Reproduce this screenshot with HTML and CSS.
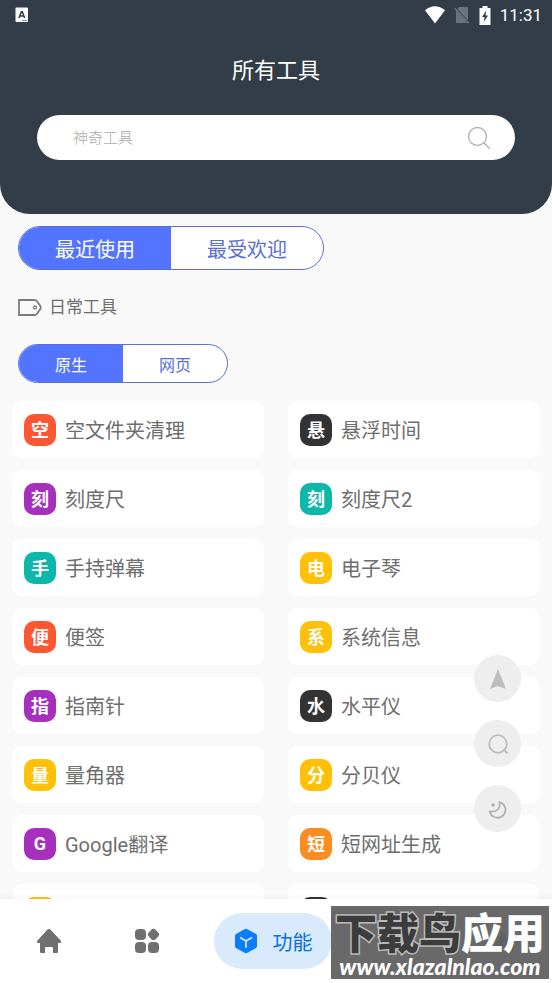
FILE: index.html
```html
<!DOCTYPE html>
<html lang="zh-CN">
<head>
<meta charset="utf-8">
<meta name="viewport" content="width=device-width, initial-scale=1">
<title>所有工具</title>
<link rel="stylesheet" href="styles.css">
</head>
<body>
<div class="app">
  <header class="header">
    <div class="status">
      <svg class="status-app" width="14" height="16" viewBox="0 0 14 16"><rect x="0.500" y="0.500" width="12.500" height="14.500" rx="1" fill="#fff"/><path d="M4 11 6.300 4.800h1L9.600 11M5 9h3.600" fill="none" stroke="#333d47" stroke-width="1.500"/><path d="M7 13.500h5" stroke="#8a9299"/></svg>
      <div class="status-right">
        <svg width="20" height="18" viewBox="0 0 20 18"><path d="M0 4.300Q10-3.800 20 4.300L10 17.500z" fill="#fff"/></svg>
        <svg width="16" height="18" viewBox="0 0 16 18"><path d="M5 1h9v13.200L3.500 3z" fill="#6b747c"/><path d="M2 4.500 13.500 17H2z" fill="#6b747c"/><path d="M.8 2.200 14.800 17.300" stroke="#6b747c" stroke-width="1.500"/></svg>
        <svg width="12" height="19" viewBox="0 0 12 19"><path d="M3.500 0h5v2h3v17H.5V2h3z" fill="#fff"/><path d="M7.300 4.500 3 11h2.600L4.800 16 9 9.500H6.500z" fill="#333d47"/></svg>
        <span class="clock">11:31</span>
      </div>
    </div>
    <h1 class="title">所有工具</h1>
    <form class="search">
      <input class="search-input" type="search" placeholder="神奇工具" aria-label="搜索工具">
      <button class="search-button" type="button" aria-label="搜索"><svg width="24" height="24" viewBox="0 0 24 24" fill="none" stroke="#b5b5b5" stroke-width="1.400"><circle cx="10.500" cy="10.500" r="9"/><path d="m16.800 16.800 6 6"/></svg></button>
    </form>
  </header>

  <main class="content">
    <div class="segment">
      <button class="segment-item active" type="button">最近使用</button>
      <button class="segment-item" type="button">最受欢迎</button>
    </div>
    <h2 class="section"><svg width="24" height="17" viewBox="0 0 24 17" fill="none" stroke="#7b7b7b" stroke-width="1.800"><path d="M1 1h15.500q1.500 0 2.500 1.300l3.300 4.700q.9 1.500 0 3L19 14.700q-1 1.300-2.500 1.300H1z"/><circle cx="17" cy="8.500" r="1.500" stroke-width="1.300"/></svg>日常工具</h2>
    <div class="segment small">
      <button class="segment-item active" type="button">原生</button>
      <button class="segment-item" type="button">网页</button>
    </div>
    <div class="tools">
      <a class="tool" href="#"><span class="badge red">空</span>空文件夹清理</a>
      <a class="tool" href="#"><span class="badge dark">悬</span>悬浮时间</a>
      <a class="tool" href="#"><span class="badge purple">刻</span>刻度尺</a>
      <a class="tool" href="#"><span class="badge teal">刻</span>刻度尺2</a>
      <a class="tool" href="#"><span class="badge teal">手</span>手持弹幕</a>
      <a class="tool" href="#"><span class="badge yellow">电</span>电子琴</a>
      <a class="tool" href="#"><span class="badge red">便</span>便签</a>
      <a class="tool" href="#"><span class="badge yellow">系</span>系统信息</a>
      <a class="tool" href="#"><span class="badge purple">指</span>指南针</a>
      <a class="tool" href="#"><span class="badge dark">水</span>水平仪</a>
      <a class="tool" href="#"><span class="badge yellow">量</span>量角器</a>
      <a class="tool" href="#"><span class="badge yellow">分</span>分贝仪</a>
      <a class="tool" href="#"><span class="badge purple">G</span>Google翻译</a>
      <a class="tool" href="#"><span class="badge orange">短</span>短网址生成</a>
      <a class="tool" href="#"><span class="badge yellow"></span></a>
      <a class="tool" href="#"><span class="badge dark"></span></a>
    </div>
  </main>

  <div class="floating">
    <button class="float-button" type="button" aria-label="回到顶部"><svg width="18" height="22" viewBox="0 0 18 22"><path d="M9 1 17 21l-8-3L1 21z" fill="#bdbdbd"/></svg></button>
    <button class="float-button" type="button" aria-label="搜索"><svg width="22" height="22" viewBox="0 0 22 22" fill="none" stroke="#bdbdbd" stroke-width="1.800"><circle cx="11" cy="11" r="8.800"/><path d="m16.500 16.500 4 4"/></svg></button>
    <button class="float-button" type="button" aria-label="夜间模式"><svg width="20" height="20" viewBox="0 0 20 20" fill="none" stroke="#b0b0b0" stroke-width="1.800"><path d="M11.500 3a8 8 0 1 1-9.800 9.500q5.300.8 8-2t1.800-7.500z" stroke-linejoin="round"/><circle cx="5" cy="6" r="1.800" fill="#b0b0b0" stroke="none"/></svg></button>
  </div>

  <nav class="nav">
    <a class="nav-item" href="#" aria-label="首页"><svg width="26" height="26" viewBox="0 0 26 26"><path d="M11.300 1.700q1.700-1.500 3.400 0L25 13q.8 1.500-1 2h-2v9q0 1-1 1h-4v-5q0-1-1-1h-6q-1 0-1 1v5H5q-1 0-1-1v-9H2q-1.800-.5-1-2z" fill="#707070"/></svg></a>
    <a class="nav-item" href="#" aria-label="分类"><svg width="26" height="26" viewBox="0 0 26 26" fill="#707070"><rect x="1" y="1" width="11" height="11" rx="4"/><rect x="1" y="14" width="11" height="11" rx="4"/><rect x="14" y="14" width="11" height="11" rx="4"/><rect x="14.700" y="1.700" width="9.600" height="9.600" rx="3" transform="rotate(45 19.500 6.500)"/></svg></a>
    <a class="nav-item current" href="#"><svg width="24" height="26" viewBox="0 0 24 26"><path d="M10.500 1.200q1.500-.8 3 0L22 6q1 .7 1 2v10q0 1.300-1 2l-8.500 4.800q-1.500.8-3 0L2 20q-1-.7-1-2V8q0-1.300 1-2z" fill="#0a7cff"/><path d="m6 9.500 6 3.500 6-3.500M12 13v7" fill="none" stroke="#d9eafc" stroke-width="1.700"/></svg>功能</a>
    <a class="nav-item" href="#" aria-label="收藏"></a>
    <a class="nav-item" href="#" aria-label="我的"><svg width="26" height="26" viewBox="0 0 26 26"><path d="M13 3 24 22l-4 3-7-7-7 7-4-3z" fill="#707070"/></svg></a>
  </nav>

  <aside class="watermark">
    <div class="mark-name"><span class="mark-dark">下载鸟</span>应用</div>
    <div class="mark-url">www.xlazalnlao.com</div>
  </aside>
</div>
</body>
</html>
```
FILE: styles.css
```css
* {
  box-sizing: border-box;
}

body {
  margin: 0;
  background: #f9f9f9;
  color: #6e6e6e;
  font-family: Roboto, "Noto Sans CJK SC", sans-serif;
  font-weight: 400;
}

button,
input {
  font: inherit;
  border: 0;
  padding: 0;
  background: none;
}

a {
  color: inherit;
  text-decoration: none;
}

svg {
  display: block;
  flex: none;
}

.app {
  position: relative;
  height: 100vh;
  overflow: hidden;
}

.header {
  padding-bottom: 54px;
  border-radius: 0 0 30px 30px;
  background: #333d47;
  color: #fff;
}

.status {
  display: flex;
  align-items: center;
  justify-content: space-between;
  height: 30px;
  padding: 0 10px 0 15px;
}

.status-right {
  display: flex;
  align-items: center;
  gap: 9px;
}

.clock {
  font-size: 17px;
}

.title {
  margin: 25px 0 28px;
  font-size: 22px;
  line-height: 32px;
  font-weight: 400;
  text-align: center;
}

.search {
  display: flex;
  align-items: center;
  height: 45px;
  margin: 0 37px;
  padding: 0 24px 0 36px;
  border-radius: 23px;
  background: #fff;
}

.search-input {
  flex: 1;
  min-width: 0;
  font-size: 15px;
  font-weight: 300;
  outline: 0;
}

.search-input::placeholder {
  color: #ababab;
}

.content {
  padding: 12px 12px 0;
}

.segment {
  display: flex;
  width: fit-content;
  height: 44px;
  margin-left: 6px;
  overflow: hidden;
  border: 1px solid #5a70d8;
  border-radius: 22px;
  background: #fff;
  font-size: 20px;
}

.segment-item {
  padding: 0 36px;
  color: #5a70d8;
}

.segment-item.active {
  background: #5274ff;
  color: #fff;
}

.segment.small {
  height: 39px;
  font-size: 16px;
}

.section {
  display: flex;
  align-items: center;
  gap: 7px;
  margin: 24px 6px;
  font-size: 17px;
  line-height: 26px;
  font-weight: 400;
}

.tools {
  display: grid;
  grid-template-columns: 1fr 1fr;
  gap: 12px 24px;
  margin-top: 18px;
}

.tool {
  display: flex;
  align-items: center;
  gap: 9px;
  height: 57px;
  padding: 0 12px;
  border-radius: 10px;
  background: #fff;
  font-size: 20px;
}

.badge {
  display: grid;
  place-items: center;
  width: 32px;
  height: 32px;
  padding-bottom: 1px;
  border-radius: 10px;
  color: #fff;
  font-size: 18px;
  font-weight: 700;
}

.red { background: #fc5632; }
.dark { background: #333; }
.purple { background: #a62fbd; }
.teal { background: #0bb8a9; }
.yellow { background: #fec107; }
.orange { background: #fb8c1e; }

.floating {
  position: absolute;
  right: 31px;
  bottom: 151px;
  display: grid;
  gap: 18px;
}

.float-button {
  display: grid;
  place-items: center;
  width: 47px;
  height: 47px;
  border-radius: 50%;
  background: #eee;
}

.nav {
  position: absolute;
  inset: auto 0 0;
  display: flex;
  align-items: center;
  height: 84px;
  background: #fff;
  box-shadow: 0 0 8px #0001;
}

.nav-item {
  display: flex;
  flex: 1;
  align-items: center;
  justify-content: center;
  gap: 15px;
  height: 56px;
  font-size: 20px;
}

.nav-item.current {
  flex: none;
  width: 118px;
  margin: 0 24px 0 18px;
  border-radius: 28px;
  background: #d9eafc;
  color: #0a6fe0;
}

.watermark {
  position: absolute;
  right: 3px;
  bottom: 4px;
  width: 218px;
  height: 73px;
  background: #606060f0;
  color: #fff;
  text-align: center;
  white-space: nowrap;
}

.mark-name {
  padding-top: 8px;
  font-size: 42px;
  line-height: 42px;
  font-weight: 900;
}

.mark-dark {
  color: #3c3c3c;
  paint-order: stroke fill;
  -webkit-text-stroke: 3px #bbb;
}

.mark-url {
  font-family: Lato, sans-serif;
  font-size: 23px;
  line-height: 21px;
  font-weight: 900;
  font-style: italic;
}
```
